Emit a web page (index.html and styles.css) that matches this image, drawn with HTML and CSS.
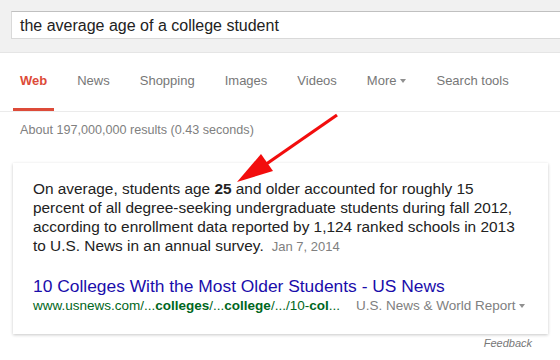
FILE: index.html
```html
<!DOCTYPE html>
<html>
<head>
<meta charset="utf-8">
<link rel="stylesheet" href="styles.css">
</head>
<body>
<div class="page">
  <header class="searchbar">
    <div class="searchbox">the average age of a college student</div>
  </header>
  <nav class="tabs">
    <span class="tab active">Web</span>
    <span class="tab">News</span>
    <span class="tab">Shopping</span>
    <span class="tab">Images</span>
    <span class="tab">Videos</span>
    <span class="tab">More<span class="caret"></span></span>
    <span class="tab">Search tools</span>
  </nav>
  <div class="stats">About 197,000,000 results (0.43 seconds)</div>
  <div class="card">
    <p class="snippet">On average, students age <b>25</b> and older accounted for roughly 15 percent of all degree-seeking undergraduate students during fall 2012, according to enrollment data reported by 1,124 ranked schools in 2013 to U.S. News in an annual survey.<span class="date">Jan 7, 2014</span></p>
    <a class="title" href="#">10 Colleges With the Most Older Students - US News</a>
    <div class="cite"><span class="url">www.usnews.com/...<b>colleges</b>/...<b>college</b>/.../10-<b>col</b>...</span><span class="source">U.S. News &amp; World Report<span class="caret"></span></span></div>
  </div>
  <div class="feedback">Feedback</div>
  <svg class="arrow" width="106" height="72" viewBox="235 112 106 72">
    <line x1="337" y1="115" x2="262" y2="167" stroke="#f20d0d" stroke-width="3.2"/>
    <polygon points="237,182 261,154 273,171" fill="#f20d0d"/>
  </svg>
</div>
</body>
</html>
```
FILE: styles.css
```css
html, body {
  margin: 0;
  padding: 0;
  background: #fff;
  overflow: hidden;
}
.page {
  position: relative;
  width: 560px;
  height: 360px;
  overflow: hidden;
  font-family: "Liberation Sans", Arial, sans-serif;
}
.searchbar {
  height: 53px;
  box-sizing: border-box;
  background: #f1f1f1;
  border-bottom: 1px solid #e5e5e5;
  padding: 11px 0 0 11px;
}
.searchbox {
  width: 620px;
  height: 28px;
  box-sizing: border-box;
  background: #fff;
  border: 1px solid #d9d9d9;
  border-top-color: #c0c0c0;
  padding: 2px 0 0 8px;
  font-size: 16px;
  line-height: 24px;
  color: #222;
}
.tabs {
  display: flex;
  gap: 16px;
  height: 59px;
  box-sizing: border-box;
  padding-left: 13px;
  border-bottom: 1px solid #ebebeb;
}
.tab {
  display: flex;
  align-items: center;
  padding: 0 7px;
  font-size: 13px;
  color: #777;
  border-bottom: 3px solid transparent;
}
.tab.active {
  color: #dd4b39;
  font-weight: bold;
  border-bottom-color: #dd4b39;
}
.caret {
  display: inline-block;
  width: 0;
  height: 0;
  margin-left: 4px;
  border-left: 3px solid transparent;
  border-right: 3px solid transparent;
  border-top: 4px solid #909090;
  vertical-align: middle;
}
.stats {
  padding: 10px 0 0 20px;
  font-size: 12.6px;
  line-height: 16px;
  color: #808080;
  height: 41px;
}
.card {
  margin-left: 13px;
  width: 535px;
  box-sizing: border-box;
  padding: 16px 20px 19px 20px;
  background: #fff;
  box-shadow: 0 1px 3px rgba(0, 0, 0, 0.22);
}
.snippet {
  margin: 0 0 19px 0;
  font-size: 15.4px;
  line-height: 19px;
  color: #222;
}
.snippet b {
  font-weight: bold;
}
.date {
  margin-left: 8px;
  font-size: 13px;
  color: #808080;
}
.title {
  display: block;
  font-size: 17.4px;
  line-height: 22px;
  color: #1a0dab;
  text-decoration: none;
}
.cite {
  display: flex;
  gap: 16px;
  font-size: 13.5px;
  line-height: 18px;
}
.url {
  color: #006621;
}
.source {
  color: #808080;
}
.feedback {
  width: 532px;
  text-align: right;
  font-size: 11px;
  line-height: 18px;
  font-style: italic;
  color: #777;
}
.arrow {
  position: absolute;
  left: 235px;
  top: 112px;
}
```
